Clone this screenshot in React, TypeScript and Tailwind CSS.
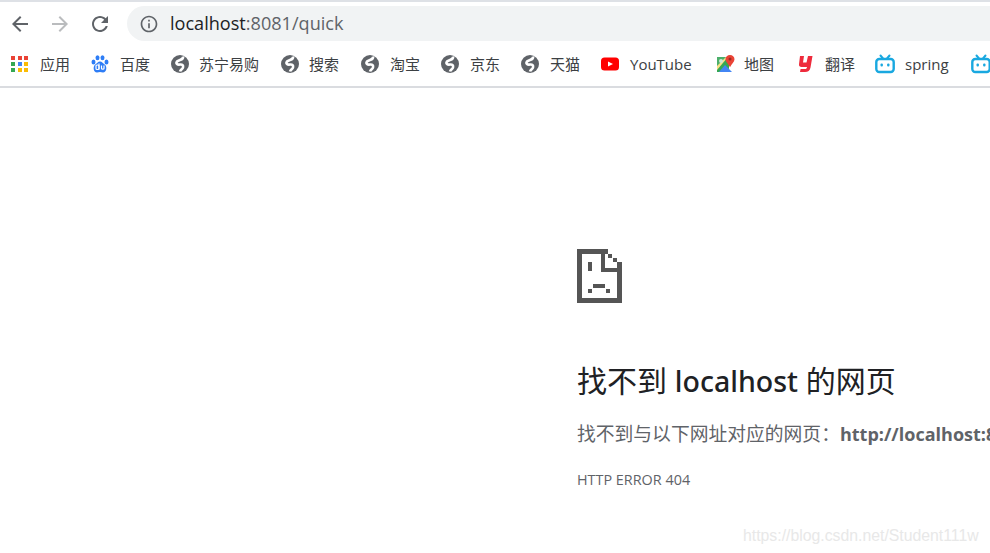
import React from "react";

const uiFont = { fontFamily: '"Open Sans", "Noto Sans CJK SC", sans-serif' };

function GlobeIcon() {
  return (
    <svg width="18" height="18" viewBox="0 0 18 18" className="shrink-0">
      <circle cx="9" cy="9" r="9" fill="#5f6368" />
      <path d="M12 1.500C13 5 8 4.500 6 6.500 4.500 8.500 6.500 10 9 9.500c2.500-.3 3.500 1 3 3-.4 1.500-2.500 2-3 4" fill="none" stroke="#fff" strokeWidth="2.600" />
    </svg>
  );
}

function AppsIcon() {
  const colors = ["#ea4335", "#ea4335", "#ea4335", "#34a853", "#4285f4", "#fbbc05", "#34a853", "#fbbc05", "#fbbc05"];
  return (
    <div className="grid grid-cols-3 gap-[2px] w-[18px] h-[17px] shrink-0">
      {colors.map((c, i) => (
        <div key={i} className="w-[4px] h-[4px]" style={{ backgroundColor: c }} />
      ))}
    </div>
  );
}

function BaiduIcon() {
  return (
    <svg width="18" height="18" viewBox="0 0 18 18" className="shrink-0">
      <g fill="#2e7df6">
        <ellipse cx="2.500" cy="7" rx="2" ry="2.500" />
        <ellipse cx="6.500" cy="2.800" rx="2" ry="2.500" />
        <ellipse cx="11.500" cy="2.800" rx="2" ry="2.500" />
        <ellipse cx="15.500" cy="7" rx="2" ry="2.500" />
        <path d="M9 6.500c2 0 3.300 2 5 3.200 2.200 1.800 1.800 7.800-2 7.800-1 0-2-.4-3-.4s-2 .4-3 .4c-3.800 0-4.200-6-2-7.800C5.700 8.500 7 6.500 9 6.500z" />
      </g>
      <rect x="5" y="10" width="3" height="4.500" rx="1" fill="none" stroke="#fff" strokeWidth="1.200" />
      <path d="M8 8.500v6M10.500 10.500v3c0 1 2.500 1 2.500 0v-3" fill="none" stroke="#fff" strokeWidth="1.200" />
    </svg>
  );
}

function YoutubeIcon() {
  return (
    <svg width="18" height="18" viewBox="0 0 18 18" className="shrink-0">
      <rect x="0" y="2.500" width="18" height="13" rx="3.500" fill="#ff0000" />
      <path d="M7 6.500l5 2.500-5 2.500z" fill="#fff" />
    </svg>
  );
}

function MapsIcon() {
  return (
    <svg width="19" height="19" viewBox="0 0 19 19" className="shrink-0">
      <path d="M1 2h12v15H1z" fill="#34a853" />
      <path d="M3 17l6-7 7 7z" fill="#4285f4" />
      <path d="M1 10l8-8h3L1 15z" fill="#fbe08a" />
      <path d="M1 2h9L1 11z" fill="#4caf6a" />
      <circle cx="5" cy="6" r="2" fill="#cfe8d5" />
      <path d="M14 0c2.500 0 4.500 1.800 4.500 4.200 0 2.500-3 5-4.500 8-1.500-3-4.500-5.500-4.500-8C9.500 1.800 11.500 0 14 0z" fill="#ea4335" />
      <circle cx="14" cy="4" r="1.500" fill="#9c2b22" />
    </svg>
  );
}

function YoudaoIcon() {
  return (
    <svg width="18" height="18" viewBox="0 0 18 18" className="shrink-0">
      <path d="M3 1h4L6 7.500h3.500L11 1h4.500l-2 11.500C13 15.500 11 17 8 17H3l.6-3H8c1.300 0 1.800-.6 2-2H4.500C2.800 12 1.800 11 2 9.300z" fill="#ee2b3c" />
    </svg>
  );
}

function BilibiliIcon() {
  return (
    <svg width="20" height="20" viewBox="0 0 20 20" className="shrink-0">
      <path d="M5.500 1.500L8 4.500M14.500 1.500L12 4.500" stroke="#19a8e0" strokeWidth="2" strokeLinecap="round" />
      <rect x="1.300" y="5" width="17.400" height="13" rx="3" fill="#fff" stroke="#19a8e0" strokeWidth="2.400" />
      <rect x="5.500" y="9.500" width="2.400" height="3" rx="1" fill="#19a8e0" />
      <rect x="12.100" y="9.500" width="2.400" height="3" rx="1" fill="#19a8e0" />
    </svg>
  );
}

// item widths come from the spacing in the bookmark bar
const bookmarks: { label: string; icon: React.ReactNode; cls: string }[] = [
  { label: "应用", icon: <AppsIcon />, cls: "w-[80px] gap-[11px]" },
  { label: "百度", icon: <BaiduIcon />, cls: "w-[80px] gap-[11px]" },
  { label: "苏宁易购", icon: <GlobeIcon />, cls: "w-[110px] gap-[10px]" },
  { label: "搜索", icon: <GlobeIcon />, cls: "w-[80px] gap-[10px]" },
  { label: "淘宝", icon: <GlobeIcon />, cls: "w-[80px] gap-[11px]" },
  { label: "京东", icon: <GlobeIcon />, cls: "w-[80px] gap-[11px]" },
  { label: "天猫", icon: <GlobeIcon />, cls: "w-[80px] gap-[11px]" },
  { label: "YouTube", icon: <YoutubeIcon />, cls: "w-[115px] gap-[11px]" },
  { label: "地图", icon: <MapsIcon />, cls: "w-[81px] gap-[9px]" },
  { label: "翻译", icon: <YoudaoIcon />, cls: "w-[78px] gap-[10px]" },
  { label: "spring", icon: <BilibiliIcon />, cls: "w-[96px] gap-[10px]" },
  { label: "", icon: <BilibiliIcon />, cls: "w-[20px]" },
];

function SadPage() {
  return (
    <svg width="45" height="54" viewBox="0 0 45 54" fill="#555">
      <rect x="0" y="0" width="5" height="54" />
      <rect x="0" y="0" width="31" height="5" />
      <rect x="0" y="49" width="45" height="5" />
      <rect x="40" y="13" width="5" height="41" />
      <rect x="24" y="0" width="4" height="23" />
      <rect x="24" y="19" width="21" height="4" />
      <rect x="31" y="5" width="4" height="4" />
      <rect x="36" y="9" width="4" height="4" />
      <rect x="11" y="13" width="4" height="9" />
      <rect x="16" y="35" width="12" height="4" />
      <rect x="11" y="40" width="4" height="4" />
      <rect x="29" y="40" width="4" height="4" />
    </svg>
  );
}

export default function App() {
  return (
    <div className="w-[990px] h-[553px] overflow-hidden bg-white relative" style={uiFont}>
      {/* toolbar */}
      <div className="border-t-2 border-[#dee1e6] h-[45px] flex items-center pl-[8px]">
        <svg width="24" height="24" viewBox="0 0 24 24" fill="#5f6368">
          <path d="M20 11H7.830l5.590-5.590L12 4l-8 8 8 8 1.410-1.410L7.830 13H20v-2z" />
        </svg>
        <svg width="24" height="24" viewBox="0 0 24 24" fill="#babcbe" className="ml-[16px]">
          <path d="M12 4l-1.410 1.410L16.170 11H4v2h12.170l-5.580 5.590L12 20l8-8z" />
        </svg>
        <svg width="24" height="24" viewBox="0 0 24 24" fill="#5f6368" className="ml-[16px]">
          <path d="M17.650 6.350C16.200 4.900 14.210 4 12 4c-4.420 0-7.990 3.580-7.990 8s3.570 8 7.990 8c3.730 0 6.840-2.550 7.730-6h-2.080c-.82 2.330-3.040 4-5.650 4-3.310 0-6-2.690-6-6s2.690-6 6-6c1.660 0 3.140.69 4.220 1.780L13 11h7V4l-2.350 2.350z" />
        </svg>
        <div className="ml-[15px] flex-1 h-[35px] bg-[#f1f3f4] rounded-l-[18px] flex items-center pl-[12px] whitespace-nowrap">
          <svg width="20" height="20" viewBox="0 0 24 24" fill="#5f6368">
            <path d="M11 7h2v2h-2zm0 4h2v6h-2zm1-9C6.480 2 2 6.480 2 12s4.480 10 10 10 10-4.480 10-10S17.520 2 12 2zm0 18c-4.410 0-8-3.590-8-8s3.590-8 8-8 8 3.590 8 8-3.590 8-8 8z" />
          </svg>
          <span className="ml-[11px] text-[18.100px] text-[#202124]">
            localhost<span className="text-[#5f6368]">:8081/quick</span>
          </span>
        </div>
      </div>

      {/* bookmarks bar */}
      <div className="h-[43px] flex items-center pl-[11px] pb-[3px] border-b-2 border-[#dadce0] whitespace-nowrap overflow-hidden">
        {bookmarks.map((b, i) => (
          <div key={i} className={`flex items-center shrink-0 ${b.cls}`}>
            {b.icon}
            {b.label && <span className="text-[15px] text-[#3c4043]">{b.label}</span>}
          </div>
        ))}
      </div>

      {/* error page */}
      <div className="pl-[577px] pt-[161px] whitespace-nowrap overflow-hidden">
        <SadPage />
        <h1 className="mt-[53px] text-[30px] leading-[50px] text-[#202124]">
          找不到 <span className="text-[28.500px] font-medium font-['Noto_Sans']">localhost</span> 的网页
        </h1>
        <p className="mt-[12px] text-[18.800px] leading-[32px] text-[#5f6368]">
          找不到与以下网址对应的网页：<strong className="font-bold text-[18px]">http://localhost:8</strong>
        </p>
        <div className="mt-[20px] text-[14.400px] leading-[20px] text-[#5f6368]">HTTP ERROR 404</div>
      </div>

      <div
        className="absolute left-[743px] top-[526px] text-[15.800px] leading-[20px] text-[#e8e8e8] whitespace-nowrap"
        style={{ fontFamily: '"Liberation Sans", sans-serif' }}
      >
        https://blog.csdn.net/Student111w
      </div>
    </div>
  );
}
